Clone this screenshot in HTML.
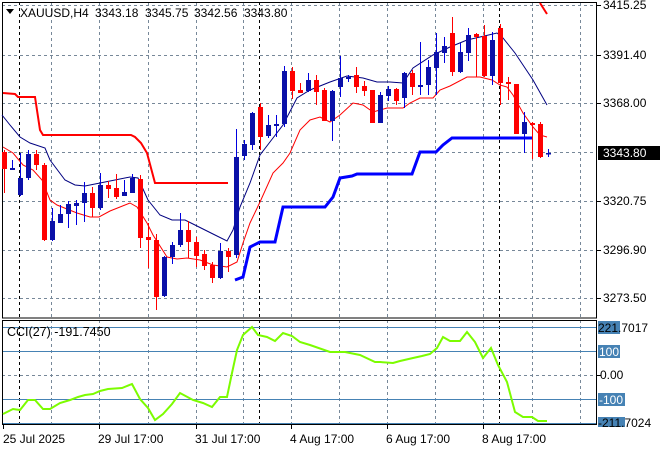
<!DOCTYPE html>
<html><head><meta charset="utf-8"><style>
html,body{margin:0;padding:0;background:#fff;width:660px;height:450px;overflow:hidden}
svg{display:block}
text{font-family:"Liberation Sans",sans-serif;font-size:12px;fill:#000}
</style></head><body>
<svg width="660" height="450" viewBox="0 0 660 450" xmlns="http://www.w3.org/2000/svg">
<rect width="660" height="450" fill="#fff"/>
<!-- grid -->
<g stroke="#778899" stroke-width="1" stroke-dasharray="3,3" fill="none">
<path d="M2 5.5H597M2 55.5H597M2 103.5H597M2 152.5H597M2 201.5H597M2 250.5H597M2 298.5H597M2 375.5H597"/>
<path d="M51.5 2V318M99.5 2V318M148.5 2V318M196.5 2V318M243.5 2V318M291.5 2V318M339.5 2V318M387.5 2V318M435.5 2V318M483.5 2V318M532.5 2V318M580.5 2V318"/>
<path d="M51.5 320V424M99.5 320V424M148.5 320V424M196.5 320V424M243.5 320V424M291.5 320V424M339.5 320V424M387.5 320V424M435.5 320V424M483.5 320V424M532.5 320V424M580.5 320V424"/>
</g>
<g stroke="#000" stroke-width="1" stroke-dasharray="3,3">
<path d="M19.5 2V318M259.5 2V318M499.5 2V318M19.5 320V424M259.5 320V424M499.5 320V424"/>
</g>
<!-- CCI levels -->
<g stroke="#4682b4" stroke-width="1"><path d="M2 327.5H597M2 351.5H597M2 399.5H597M2 423.5H597"/></g>
<!-- frames -->
<g stroke="#000" fill="none" stroke-width="1">
<rect x="2.5" y="2.5" width="594" height="315.5"/>
<rect x="2.5" y="320.5" width="594" height="104"/>
</g>
<!-- red step -->
<polyline fill="none" stroke="#f00" stroke-width="2" points="3,93 15,94 18,97 35,97 40,130 43,135 131,135 135,137 141,143 147,153 155,183 228,183"/>
<polyline fill="none" stroke="#f00" stroke-width="2" points="540,3 547,14"/>
<!-- blue step -->
<polyline fill="none" stroke="#0000ff" stroke-width="3" points="235,280 243,277 250,247 260,242 275,242 283,207 325,207 333,197 340,178 352,176 357,174 412,174 420,152 436,152 443,145 452,138 532,138"/>
<!-- navy MA -->
<polyline fill="none" stroke="#000080" stroke-width="1" points="2,115 10,125 20,137 30,143 45,148 50,160 65,180 75,185 85,186 100,183 115,180 130,177 138,178 148,200 160,215 172,220 185,220 195,225 215,235 227,241 233,230 240,207 250,183 260,155 273,138 283,125 297,98 310,90 330,82 347,76 363,78 377,82 390,82 403,83 413,68 433,55 450,47 467,40 480,37 497,33 503,38 515,53 533,80 547,105"/>
<!-- red MA -->
<polyline fill="none" stroke="#f00" stroke-width="1" points="3,147 13,153 23,165 33,170 42,180 50,200 57,205 77,213 90,217 99,217 110,211 130,203 137,207 147,223 153,235 167,257 177,259 187,258 200,260 213,265 227,267 237,262 243,243 250,223 260,202 273,173 283,163 290,153 300,130 310,120 320,117 330,122 340,115 353,103 363,105 373,112 387,108 403,108 410,103 420,98 433,98 440,90 450,86 467,77 480,77 492,80 500,85 507,87 513,95 523,113 533,127 540,135 547,137"/>
<!-- red candles -->
<g fill="#f00" stroke="#f00">
<path stroke-width="1" d="M4.5 150V193M36.5 150V170M44.5 163V241M92.5 187V217M108.5 181V198M116.5 174V199M140.5 175V248M148.5 223V268M156.5 234V310M188.5 221V258M196.5 237V267M204.5 250V270M212.5 262V283M228.5 248V272M260.5 103V150M292.5 67V99M300.5 83V93M316.5 75V105M324.5 88V121M356.5 67V93M364.5 81V96M372.5 90V123M396.5 88V105M412.5 70V95M452.5 17V76M476.5 33V77M484.5 25V77M500.5 24V105M508.5 77V100M516.5 84V134M532.5 122V159M540.5 122V158"/>
<g stroke="none">
<rect x="2" y="152" width="5" height="17"/><rect x="34" y="154" width="5" height="11"/><rect x="42" y="165" width="5" height="75"/>
<rect x="90" y="193" width="5" height="15"/><rect x="106" y="185" width="5" height="4"/><rect x="114" y="188" width="5" height="9"/>
<rect x="138" y="179" width="5" height="59"/><rect x="146" y="237" width="5" height="3"/><rect x="154" y="240" width="5" height="57"/>
<rect x="186" y="230" width="5" height="12"/><rect x="194" y="242" width="5" height="14"/><rect x="202" y="254" width="5" height="12"/>
<rect x="210" y="265" width="5" height="13"/><rect x="226" y="251" width="5" height="6"/><rect x="258" y="107" width="5" height="30"/>
<rect x="290" y="71" width="5" height="20"/><rect x="298" y="90" width="5" height="3"/><rect x="314" y="80" width="5" height="12"/>
<rect x="322" y="90" width="5" height="31"/><rect x="354" y="75" width="5" height="12"/><rect x="362" y="86" width="5" height="5"/>
<rect x="370" y="90" width="5" height="33"/><rect x="394" y="89" width="5" height="12"/><rect x="410" y="73" width="5" height="14"/>
<rect x="450" y="33" width="5" height="39"/><rect x="474" y="34" width="5" height="3"/><rect x="482" y="36" width="5" height="40"/>
<rect x="498" y="28" width="5" height="55"/><rect x="506" y="82" width="5" height="2"/><rect x="514" y="84" width="5" height="50"/>
<rect x="530" y="123" width="5" height="2"/><rect x="538" y="124" width="5" height="33"/>
</g></g>
<!-- blue candles -->
<g fill="#0a10a8" stroke="#0000e0">
<path stroke-width="1" d="M12.5 160V170M20.5 153V196M28.5 150V180M52.5 208V241M60.5 205V223M68.5 201V228M76.5 200V225M84.5 182V222M100.5 173V210M124.5 180V196M132.5 174V193M164.5 256V297M172.5 242V264M180.5 213V247M220.5 243V279M236.5 129V258M244.5 140V160M252.5 112V150M268.5 115V138M276.5 115V137M284.5 66V127M308.5 73V92M332.5 90V141M340.5 56V97M348.5 75V82M380.5 92V123M388.5 86V101M404.5 72V108M420.5 42V95M428.5 60V95M436.5 33V95M444.5 37V63M460.5 43V73M468.5 28V61M492.5 32V85M524.5 112V153M548.5 149V157"/>
<g stroke="none">
<rect x="10" y="168" width="5" height="2"/><rect x="18" y="178" width="5" height="17"/><rect x="26" y="154" width="5" height="24"/>
<rect x="50" y="221" width="5" height="19"/><rect x="58" y="214" width="5" height="9"/><rect x="66" y="204" width="5" height="10"/>
<rect x="74" y="203" width="5" height="3"/><rect x="82" y="193" width="5" height="10"/><rect x="98" y="185" width="5" height="23"/>
<rect x="122" y="192" width="5" height="4"/><rect x="130" y="178" width="5" height="15"/><rect x="162" y="257" width="5" height="39"/>
<rect x="170" y="245" width="5" height="12"/><rect x="178" y="230" width="5" height="15"/><rect x="218" y="251" width="5" height="27"/>
<rect x="234" y="157" width="5" height="98"/><rect x="242" y="144" width="5" height="12"/><rect x="250" y="113" width="5" height="32"/>
<rect x="266" y="125" width="5" height="11"/><rect x="274" y="124" width="5" height="2"/><rect x="282" y="71" width="5" height="53"/>
<rect x="306" y="80" width="5" height="11"/><rect x="330" y="91" width="5" height="30"/><rect x="338" y="78" width="5" height="9"/>
<rect x="346" y="77" width="5" height="2"/><rect x="378" y="95" width="5" height="28"/><rect x="386" y="89" width="5" height="7"/>
<rect x="402" y="73" width="5" height="25"/><rect x="418" y="85" width="5" height="2"/><rect x="426" y="67" width="5" height="18"/>
<rect x="434" y="52" width="5" height="16"/><rect x="442" y="46" width="5" height="7"/><rect x="458" y="52" width="5" height="20"/>
<rect x="466" y="35" width="5" height="18"/><rect x="490" y="40" width="5" height="36"/><rect x="522" y="122" width="5" height="12"/>
<rect x="546" y="153" width="5" height="1.5"/>
</g></g>
<!-- CCI line -->
<polyline fill="none" stroke="#7cfc00" stroke-width="2" points="3,414 13,409 20,410 28,400 35,400 43,409 50,409 60,403 70,400 78,397 85,395 93,394 100,391 108,389 122,388 132,384 140,399 148,408 155,420 163,414 172,404 180,393 193,400 203,403 212,407 220,397 227,397 232,373 237,350 243,335 252,327 258,335 267,337 275,341 283,333 292,336 300,342 310,345 330,352 345,352 360,355 375,362 380,362 393,363 400,361 413,358 422,356 430,354 437,348 443,337 450,341 460,341 467,332 475,342 483,358 491,348 498,365 507,382 515,412 523,417 532,417 538,421 547,421"/>
<!-- header -->
<path d="M6 9H14L10 14Z" fill="#000"/>
<text x="20" y="17">XAUUSD,H4</text>
<text x="95" y="17">3343.18</text>
<text x="145" y="17">3345.75</text>
<text x="194" y="17">3342.56</text>
<text x="244" y="17">3343.80</text>
<text x="7" y="336" style="font-size:12.5px">CCI(27) -191.7450</text>
<!-- price axis -->
<g stroke="#000"><path d="M597 5.5H601M597 55.5H601M597 103.5H601M597 201.5H601M597 250.5H601M597 298.5H601M597 375.5H601"/></g>
<text x="603" y="9">3415.25</text>
<text x="603" y="59">3391.40</text>
<text x="603" y="107">3368.00</text>
<text x="603" y="205">3320.75</text>
<text x="603" y="254">3296.90</text>
<text x="603" y="302">3273.50</text>
<rect x="598" y="146" width="62" height="14" fill="#000"/>
<text x="603" y="157" style="fill:#fff">3343.80</text>
<rect x="598" y="321" width="22" height="13" fill="#4682b4"/>
<text x="598" y="332">221.7017</text>
<rect x="598" y="345" width="22" height="13" fill="#4682b4"/>
<text x="599" y="356" style="fill:#fff">100</text>
<text x="600" y="379">0.00</text>
<rect x="598" y="393" width="27" height="13" fill="#4682b4"/>
<text x="599" y="404" style="fill:#fff">-100</text>
<rect x="598" y="417" width="27" height="10" fill="#4682b4"/>
<text x="598" y="427">-211.7024</text>
<!-- time axis -->
<g stroke="#000"><path d="M3.5 425V429M99.5 425V429M196.5 425V429M291.5 425V429M387.5 425V429M483.5 425V429"/></g>
<text x="3" y="443">25 Jul 2025</text>
<text x="98" y="443">29 Jul 17:00</text>
<text x="195" y="443">31 Jul 17:00</text>
<text x="290" y="443">4 Aug 17:00</text>
<text x="386" y="443">6 Aug 17:00</text>
<text x="482" y="443">8 Aug 17:00</text>
</svg>
</body></html>
